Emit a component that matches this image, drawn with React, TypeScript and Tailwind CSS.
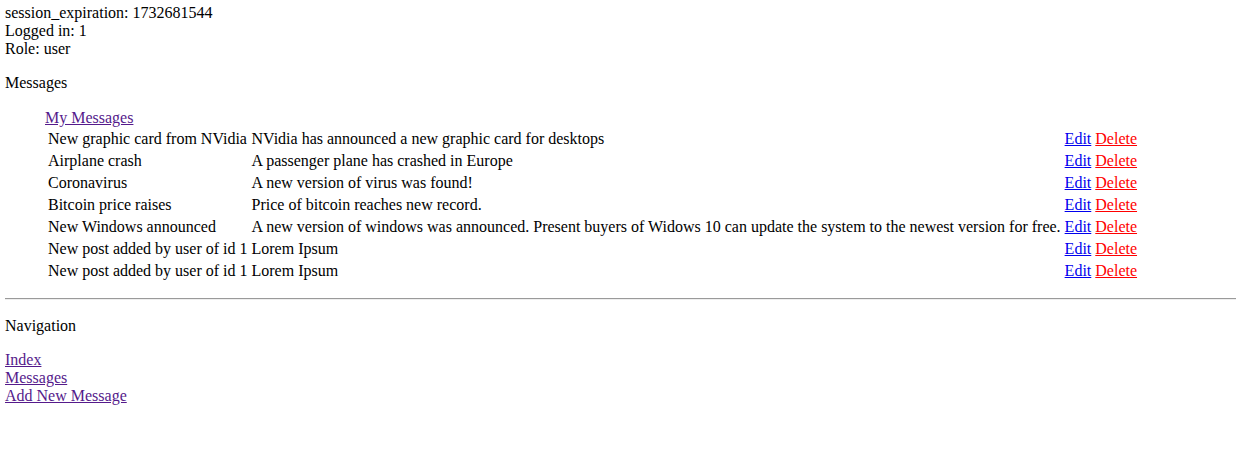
const messages = [
  { title: "New graphic card from NVidia", body: "NVidia has announced a new graphic card for desktops" },
  { title: "Airplane crash", body: "A passenger plane has crashed in Europe" },
  { title: "Coronavirus", body: "A new version of virus was found!" },
  { title: "Bitcoin price raises", body: "Price of bitcoin reaches new record." },
  {
    title: "New Windows announced",
    body: "A new version of windows was announced. Present buyers of Widows 10 can update the system to the newest version for free.",
  },
  { title: "New post added by user of id 1", body: "Lorem Ipsum" },
  { title: "New post added by user of id 1", body: "Lorem Ipsum" },
];

export default function App() {
  return (
    <div className="min-h-screen bg-white pl-[5px] pt-[4px] font-['Liberation_Serif',serif] text-[16px] leading-[18px] text-black">
      <div>
        <div>session_expiration: 1732681544</div>
        <div>Logged in: 1</div>
        <div>Role: user</div>
      </div>

      <p className="mt-4 mb-[17px]">Messages</p>

      <div className="mb-[15px] pl-10">
        <a href="#" className="text-[#551a8b] underline">
          My Messages
        </a>
        <table className="border-separate border-spacing-[2px]">
          <tbody>
            {messages.map((m, i) => (
              <tr key={i}>
                <td className="p-px">{m.title}</td>
                <td className="p-px">{m.body}</td>
                <td className="p-px whitespace-nowrap">
                  <a href="#" className="text-[#0000ee] underline">
                    Edit
                  </a>{" "}
                  <a href="#" className="text-[#ff0000] underline">
                    Delete
                  </a>
                </td>
              </tr>
            ))}
          </tbody>
        </table>
      </div>

      <hr className="mt-2 mb-[9px] border-t border-b border-t-[#9a9a9a] border-b-[#eeeeee]" />

      <p className="mt-[17px] mb-4">Navigation</p>

      <div className="flex flex-col items-start text-[#551a8b]">
        <a href="#" className="underline">
          Index
        </a>
        <a href="#" className="underline">
          Messages
        </a>
        <a href="#" className="underline">
          Add New Message
        </a>
      </div>
    </div>
  );
}
